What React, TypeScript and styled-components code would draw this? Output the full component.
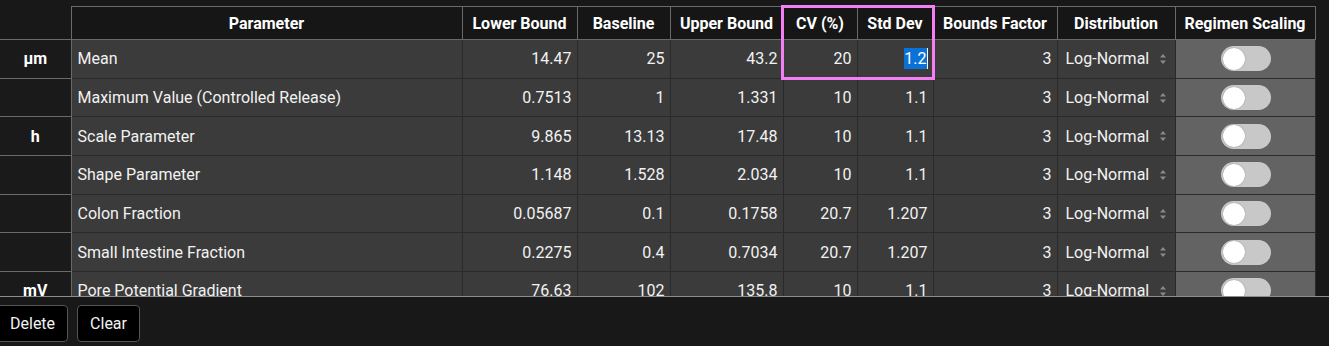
import React from "react";
import styled, { createGlobalStyle } from "styled-components";

const GlobalStyle = createGlobalStyle`
	html, body {
		margin: 0;
		padding: 0;
		background: #181818;
		font-family: Roboto, "Liberation Sans", sans-serif;
		color: #f2f2f2;
	}
`;

const Page = styled.div`
	width: 1329px;
	height: 346px;
	display: flex;
	flex-direction: column;
	background: #181818;
	overflow: hidden;
`;

const ScrollArea = styled.div`
	position: relative;
	height: 290px;
	padding-top: 6px;
	overflow: hidden;
	border-bottom: 1px solid #8c8c8c;
	flex-shrink: 0;
`;

const Table = styled.table`
	border-collapse: collapse;
	table-layout: fixed;
	width: 1315px;
	font-size: 16px;
`;

const HeadCell = styled.th<{ $corner?: boolean }>`
	height: 32px;
	padding: 0 6px;
	background: ${({ $corner }) => ($corner ? "#181818" : "#161616")};
	border: 1px solid #6a6a6a;
	border-top: ${({ $corner }) => ($corner ? "none" : "1px solid #6a6a6a")};
	border-left: ${({ $corner }) => ($corner ? "none" : "1px solid #6a6a6a")};
	font-weight: 700;
	font-size: 16px;
	color: #ffffff;
	text-align: center;
	white-space: nowrap;
`;

const UnitCell = styled.td`
	height: 37.7px;
	padding: 0;
	background: #1a1a1a;
	border: 1px solid #6a6a6a;
	border-left: none;
	font-weight: 700;
	color: #ffffff;
	text-align: center;
`;

const Cell = styled.td<{ $align?: "left" | "right"; $light?: boolean }>`
	height: 37.7px;
	padding: 0 5px 0 6px;
	background: ${({ $light }) => ($light ? "#636363" : "#3b3b3b")};
	border: 1px solid #2a2a2a;
	text-align: ${({ $align }) => $align || "right"};
	white-space: nowrap;
	color: #f2f2f2;
`;

const Selected = styled.span`
	background: #0a72d6;
	color: #ffffff;
	padding: 1px 0;
	border-right: 1px solid #ffffff;
`;

const Select = styled.div`
	display: flex;
	align-items: center;
	justify-content: space-between;
	padding-left: 2px;
	padding-right: 3px;
`;

const Arrows = styled.svg`
	width: 8px;
	height: 12px;
	flex-shrink: 0;
`;

const Toggle = styled.div`
	width: 50px;
	height: 25px;
	margin: 0 auto;
	border-radius: 13px;
	background: #c8c8c8;
	display: flex;
	align-items: center;
	padding: 0 2px;
	box-sizing: border-box;
`;

const Knob = styled.div`
	width: 22px;
	height: 22px;
	border-radius: 50%;
	background: #ffffff;
	box-shadow: 0 0 1px rgba(0, 0, 0, 0.5);
`;

const Highlight = styled.div`
	position: absolute;
	left: 781px;
	top: 5px;
	width: 148px;
	height: 69px;
	border: 3px solid #f47ef4;
	pointer-events: none;
`;

const Footer = styled.div`
	display: flex;
	gap: 9px;
	padding: 8px 0 0 0;
`;

const Button = styled.button`
	height: 37px;
	padding: 0 12px;
	background: #000000;
	color: #f2f2f2;
	border: 1px solid #555555;
	border-radius: 4px;
	font-family: Roboto, "Liberation Sans", sans-serif;
	font-size: 16px;
	&:first-child {
		margin-left: -3px;
	}
`;

type Row = {
	unit: string;
	name: string;
	lower: string;
	base: string;
	upper: string;
	cv: string;
	sd: string;
	selected?: boolean;
};

const rows: Row[] = [
	{ unit: "µm", name: "Mean", lower: "14.47", base: "25", upper: "43.2", cv: "20", sd: "1.2", selected: true },
	{ unit: "", name: "Maximum Value (Controlled Release)", lower: "0.7513", base: "1", upper: "1.331", cv: "10", sd: "1.1" },
	{ unit: "h", name: "Scale Parameter", lower: "9.865", base: "13.13", upper: "17.48", cv: "10", sd: "1.1" },
	{ unit: "", name: "Shape Parameter", lower: "1.148", base: "1.528", upper: "2.034", cv: "10", sd: "1.1" },
	{ unit: "", name: "Colon Fraction", lower: "0.05687", base: "0.1", upper: "0.1758", cv: "20.7", sd: "1.207" },
	{ unit: "", name: "Small Intestine Fraction", lower: "0.2275", base: "0.4", upper: "0.7034", cv: "20.7", sd: "1.207" },
	{ unit: "mV", name: "Pore Potential Gradient", lower: "76.63", base: "102", upper: "135.8", cv: "10", sd: "1.1" },
];

const widths = [71, 391, 115, 93, 113, 74, 76, 124, 118, 140];
const headers = ["Parameter", "Lower Bound", "Baseline", "Upper Bound", "CV (%)", "Std Dev", "Bounds Factor", "Distribution", "Regimen Scaling"];

const App = () => {
	return (
		<Page>
			<GlobalStyle />
			<ScrollArea>
				<Table>
					<colgroup>
						{widths.map((w, i) => (
							<col key={i} style={{ width: w }} />
						))}
					</colgroup>
					<thead>
						<tr>
							<HeadCell $corner />
							{headers.map((h) => (
								<HeadCell key={h}>{h}</HeadCell>
							))}
						</tr>
					</thead>
					<tbody>
						{rows.map((r) => (
							<tr key={r.name}>
								<UnitCell>{r.unit}</UnitCell>
								<Cell $align="left">{r.name}</Cell>
								<Cell>{r.lower}</Cell>
								<Cell>{r.base}</Cell>
								<Cell>{r.upper}</Cell>
								<Cell>{r.cv}</Cell>
								<Cell>{r.selected ? <Selected>{r.sd}</Selected> : r.sd}</Cell>
								<Cell>3</Cell>
								<Cell $align="left">
									<Select>
										<span>Log-Normal</span>
										<Arrows viewBox="0 0 8 12">
											<path d="M4 1 L7 4.5 H1 Z" fill="#8a8a8a" />
											<path d="M4 11 L7 7.5 H1 Z" fill="#8a8a8a" />
										</Arrows>
									</Select>
								</Cell>
								<Cell $light>
									<Toggle>
										<Knob />
									</Toggle>
								</Cell>
							</tr>
						))}
					</tbody>
				</Table>
				<Highlight />
			</ScrollArea>
			<Footer>
				<Button>Delete</Button>
				<Button>Clear</Button>
			</Footer>
		</Page>
	);
};

export default App;
